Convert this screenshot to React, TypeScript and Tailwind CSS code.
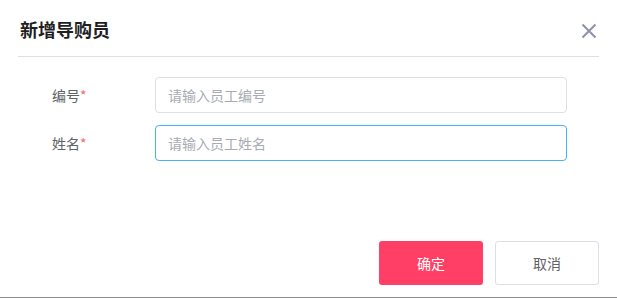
import React from "react";

export default function App() {
  const font = { fontFamily: '"Noto Sans CJK SC", "Noto Sans", sans-serif' };
  return (
    <div className="w-[617px] h-[298px] bg-white relative overflow-hidden" style={font}>
      <div className="flex flex-col h-[297px] rounded-[4px] bg-white">
        <div className="flex items-center justify-between pl-5 pr-5 h-[56px] pt-[2px]">
          <span className="text-[18px] font-bold text-[#1f1f1f] leading-none">新增导购员</span>
          <svg width="16" height="16" viewBox="0 0 16 16" className="mr-[0px] mt-[3px]">
            <path d="M1.5 1.5 L14.5 14.5 M14.5 1.5 L1.5 14.5" stroke="#8e92a8" strokeWidth="2" />
          </svg>
        </div>
        <div className="mx-[18px] h-px bg-[#dcdfe6]" />
        <div className="flex flex-col gap-3 pt-5">
          <div className="flex items-center">
            <span className="w-[155px] pl-[52px] text-[14px] text-[#606266]">
              编号<span className="text-[#f56c6c]">*</span>
            </span>
            <input
              placeholder="请输入员工编号"
              className="w-[412px] h-[36px] rounded-[4px] border border-[#dcdfe6] px-3 text-[14px] text-[#606266] placeholder:text-[#a8abb2] outline-none"
              style={font}
            />
          </div>
          <div className="flex items-center">
            <span className="w-[155px] pl-[52px] text-[14px] text-[#606266]">
              姓名<span className="text-[#f56c6c]">*</span>
            </span>
            <input
              placeholder="请输入员工姓名"
              className="w-[412px] h-[36px] rounded-[4px] border border-[#40b4f4] px-3 text-[14px] text-[#606266] placeholder:text-[#a8abb2] outline-none"
              style={font}
            />
          </div>
        </div>
        <div className="flex justify-end gap-3 pr-[18px] mt-auto mb-[12px]">
          <button className="w-[104px] h-[44px] rounded-[3px] bg-[#ff3f65] text-white text-[14px]" style={font}>
            确定
          </button>
          <button className="w-[104px] h-[44px] rounded-[3px] bg-white border border-[#dcdfe6] text-[#606266] text-[14px]" style={font}>
            取消
          </button>
        </div>
      </div>
      <div className="h-px bg-[#8a8a8a]" />
    </div>
  );
}
